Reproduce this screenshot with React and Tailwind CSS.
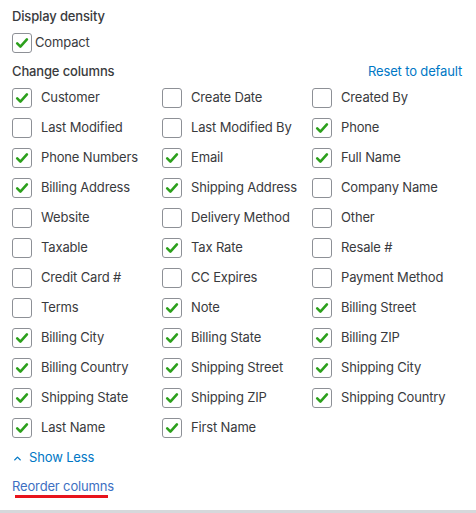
import { ChevronUp } from "lucide-react";

const columns = [
  ["Customer", true],
  ["Create Date", false],
  ["Created By", false],
  ["Last Modified", false],
  ["Last Modified By", false],
  ["Phone", true],
  ["Phone Numbers", true],
  ["Email", true],
  ["Full Name", true],
  ["Billing Address", true],
  ["Shipping Address", true],
  ["Company Name", false],
  ["Website", false],
  ["Delivery Method", false],
  ["Other", false],
  ["Taxable", false],
  ["Tax Rate", true],
  ["Resale #", false],
  ["Credit Card #", false],
  ["CC Expires", false],
  ["Payment Method", false],
  ["Terms", false],
  ["Note", true],
  ["Billing Street", true],
  ["Billing City", true],
  ["Billing State", true],
  ["Billing ZIP", true],
  ["Billing Country", true],
  ["Shipping Street", true],
  ["Shipping City", true],
  ["Shipping State", true],
  ["Shipping ZIP", true],
  ["Shipping Country", true],
  ["Last Name", true],
  ["First Name", true],
];

function Box({ checked }) {
  return (
    <span className="flex h-5 w-5 shrink-0 items-center justify-center rounded-[3px] border border-[#8d9096] bg-white">
      {checked && (
        <svg width="14" height="14" viewBox="0 0 14 14" fill="none">
          <path
            d="M2.2 7.4 L5.4 10.6 L11.9 3.4"
            stroke="#2ca01c"
            strokeWidth="2.6"
            strokeLinecap="round"
            strokeLinejoin="round"
          />
        </svg>
      )}
    </span>
  );
}

export default function App() {
  return (
    <div
      className="relative h-[513px] w-[476px] overflow-hidden bg-white text-[13px] tracking-[-0.15px] text-[#393a3d]"
      style={{ fontFamily: "Inter, 'Noto Sans', sans-serif" }}
    >
      <div className="pl-3 pr-[14px] pt-[7px]">
        <h3 className="h-[18px] font-medium leading-[18px]">Display density</h3>
        <label className="mt-[8px] flex h-5 items-center gap-[3px]">
          <Box checked />
          <span>Compact</span>
        </label>

        <div className="mt-[9px] flex h-[18px] items-center justify-between leading-[18px]">
          <h3 className="font-medium">Change columns</h3>
          <a className="text-[#0077c5]">Reset to default</a>
        </div>

        <div className="mt-[8px] grid grid-cols-[150px_150px_150px] gap-y-[10px]">
          {columns.map(([name, checked]) => (
            <label key={name} className="flex h-5 items-center gap-[9px]">
              <Box checked={checked} />
              <span className="whitespace-nowrap">{name}</span>
            </label>
          ))}
        </div>

        <button className="mt-[11px] flex h-[18px] items-center gap-[6px] text-[#0077c5]">
          <ChevronUp size={11} strokeWidth={3} />
          <span>Show Less</span>
        </button>

        <div className="mt-[10px] h-[18px] leading-[18px]">
          <a className="text-[#3d6fc2]">Reorder columns</a>
        </div>
        <div className="ml-[3px] mt-[0px] h-[3px] w-[93px] bg-[#e8141c]" />
      </div>

      <div className="absolute bottom-0 left-0 h-[3px] w-full bg-[#d6d8db]" />
    </div>
  );
}
